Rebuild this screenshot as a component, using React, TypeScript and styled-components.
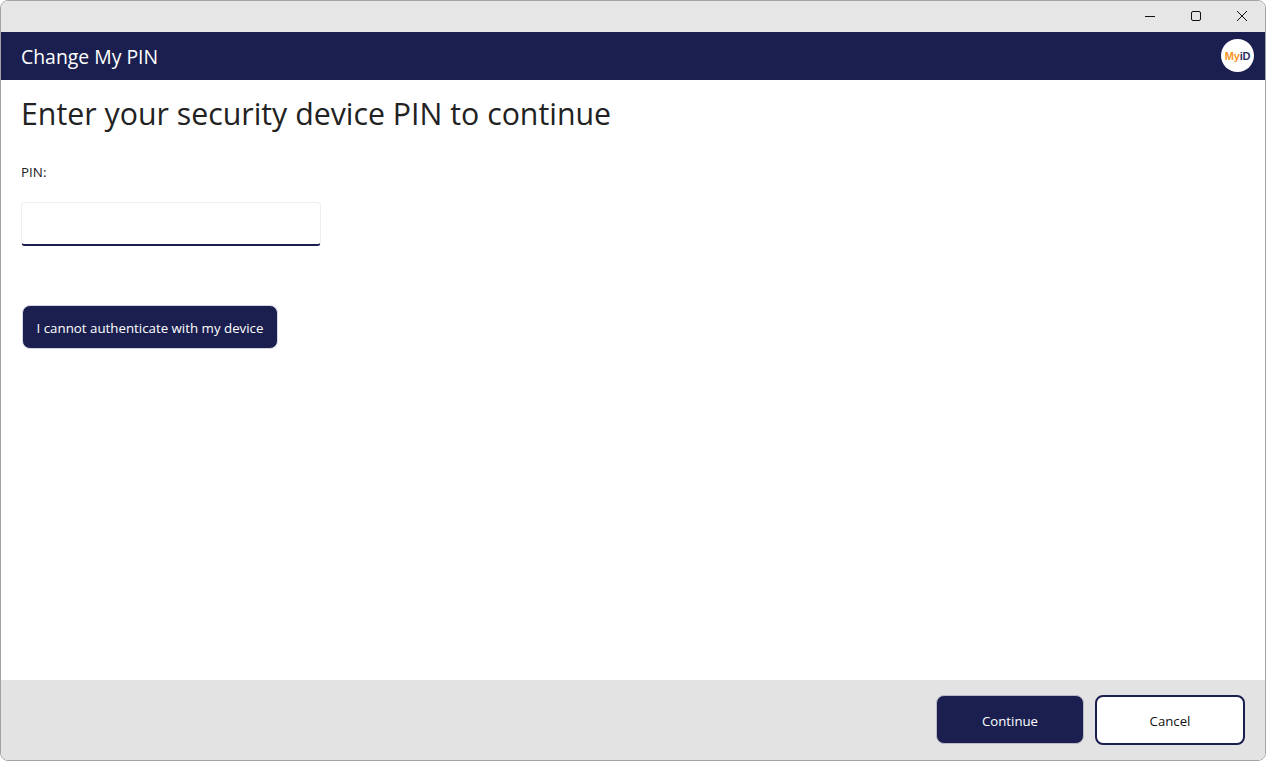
import styled, { createGlobalStyle } from 'styled-components';

const GlobalStyle = createGlobalStyle`
   html, body { margin: 0; padding: 0; background: #fff; }
   * { box-sizing: border-box; }
   body { font-family: 'Open Sans', 'Noto Sans', sans-serif; }
`;

const App = () => (
   <>
      <GlobalStyle />
      <Window>
         <TitleBar>
            <WindowButton aria-label='Minimise'>
               <svg width='12' height='12' viewBox='0 0 12 12'><path d='M1 6.5h10' stroke='#111' strokeWidth='1' /></svg>
            </WindowButton>
            <WindowButton aria-label='Maximise'>
               <svg width='12' height='12' viewBox='0 0 12 12'><rect x='1.5' y='1.5' width='9' height='9' rx='1.5' fill='none' stroke='#111' strokeWidth='1' /></svg>
            </WindowButton>
            <WindowButton aria-label='Close'>
               <svg width='12' height='12' viewBox='0 0 12 12'><path d='M1 1l10 10M11 1L1 11' stroke='#111' strokeWidth='1' /></svg>
            </WindowButton>
         </TitleBar>
         <Header>
            <HeaderTitle>Change My PIN</HeaderTitle>
            <Logo><span>My</span><b>iD</b></Logo>
         </Header>
         <Content>
            <Heading>Enter your security device PIN to continue</Heading>
            <FieldLabel htmlFor='pin'>PIN:</FieldLabel>
            <PinInput id='pin' type='password' />
            <AltButton>I cannot authenticate with my device</AltButton>
         </Content>
         <Footer>
            <PrimaryButton>Continue</PrimaryButton>
            <SecondaryButton>Cancel</SecondaryButton>
         </Footer>
      </Window>
   </>
);

export default App;

const Window = styled.div`

   display: flex;
   flex-direction: column;
   width: 1266px;
   height: 761px;
   border: 1px solid #a3a3a3;
   border-radius: 8px;
   overflow: hidden;
   background: #fff;

`;

const TitleBar = styled.div`

   display: flex;
   justify-content: flex-end;
   height: 31px;
   background: #e6e6e6;

`;

const WindowButton = styled.div`

   display: flex;
   width: 46px;
   height: 29px;
   align-items: center;
   justify-content: center;

`;

const Header = styled.div`

   display: flex;
   height: 48px;
   align-items: center;
   justify-content: space-between;
   padding: 0 11px 1px 20px;
   background: #1b1f50;

`;

const HeaderTitle = styled.span`

   margin-top: 2px;
   font-size: 19.4px;
   color: #fff;

`;

const Logo = styled.div`

   display: flex;
   width: 33px;
   height: 33px;
   align-items: center;
   justify-content: center;
   border-radius: 50%;
   background: #fff;
   font-family: 'Liberation Sans', sans-serif;
   font-size: 11px;
   font-weight: 700;
   letter-spacing: -0.2px;

   span{ color: #f7941d; }

   b{ color: #2d3163; }

`;

const Content = styled.div`

   display: flex;
   flex: 1;
   flex-direction: column;
   align-items: flex-start;
   padding: 12px 20px 0;
   color: #222;

`;

const Heading = styled.h1`

   margin: 0;
   font-size: 30.3px;
   font-weight: 400;
   line-height: 44px;

`;

const FieldLabel = styled.label`

   margin-top: 27px;
   font-size: 13.4px;
   line-height: 18px;

`;

const PinInput = styled.input`

   width: 300px;
   height: 44px;
   margin-top: 21px;
   border: 1px solid #efefef;
   border-bottom: 2px solid #1b1f50;
   border-radius: 4px;
   background: #fff;
   outline: none;

`;

const BaseButton = styled.button`

   height: 49px;
   border-radius: 8px;
   font-family: inherit;
   font-size: 13.2px;
   padding: 1px 0 0;

`;

const AltButton = styled(BaseButton)`

   width: 256px;
   height: 44px;
   margin: 59px 0 0 1px;
   padding-top: 2px;
   border: 1px solid #d5d6df;
   background: #1b1f50;
   color: #fff;
   font-size: 13.3px;

`;

const Footer = styled.div`

   display: flex;
   height: 80px;
   align-items: center;
   justify-content: flex-end;
   gap: 11px;
   padding-right: 20px;
   background: #e3e3e3;

`;

const PrimaryButton = styled(BaseButton)`

   width: 148px;
   margin-bottom: 1px;
   padding-top: 2px;
   border: 1px solid #b9bac8;
   background: #1b1f50;
   color: #fff;

`;

const SecondaryButton = styled(BaseButton)`

   width: 150px;
   height: 50px;
   border: 2px solid #1b1f50;
   background: #fff;
   color: #111;

`;
